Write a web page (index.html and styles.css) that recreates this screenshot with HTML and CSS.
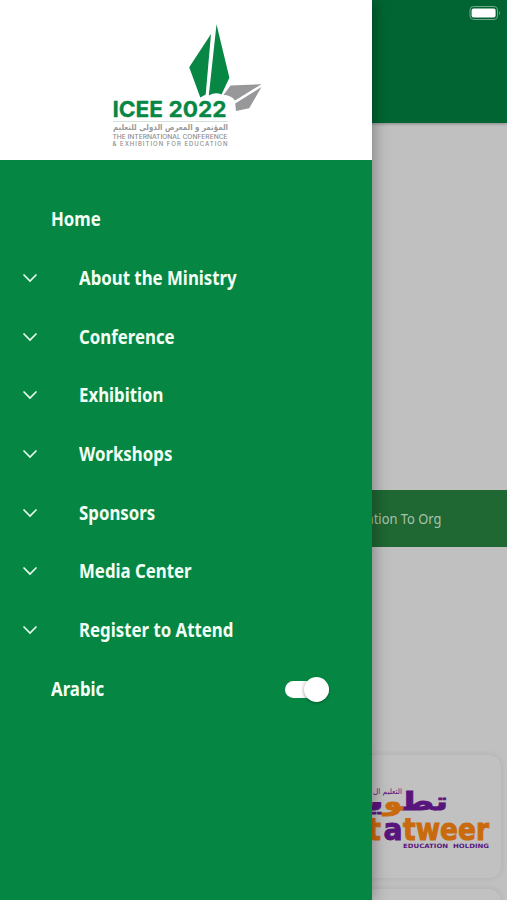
FILE: index.html
```html
<!DOCTYPE html>
<html lang="en">
<head>
<meta charset="utf-8">
<meta name="viewport" content="width=device-width, initial-scale=1">
<title>ICEE 2022</title>
<link rel="stylesheet" href="styles.css">
</head>
<body>
<div class="app">
  <main class="page">
    <header class="topbar">
      <svg class="battery" width="34" height="16" viewBox="0 0 34 16">
        <rect x="1" y="1.500" width="27.5" height="13" rx="3.5" fill="none" stroke="#6fa889"/>
        <rect x="2.600" y="3.400" width="24" height="9.200" rx="2" fill="#fff"/>
        <path d="M30 6q2 2 0 4z" fill="#6fa889"/>
      </svg>
    </header>
    <section class="hero"></section>
    <section class="banner"><span>Invitation To Org</span></section>
    <section class="sponsors">
      <article class="card">
        <svg class="tatweer" width="132" height="70" viewBox="360 783 132 70">
          <text x="402" y="794" direction="rtl" class="ar-small" textLength="29" lengthAdjust="spacingAndGlyphs">التعليم ال</text>
          <g class="ar" direction="rtl">
            <text x="448" y="810" class="purple" textLength="46" lengthAdjust="spacingAndGlyphs">تط&#8205;</text>
            <text x="402.500" y="810" class="orange" textLength="19" lengthAdjust="spacingAndGlyphs">&#8205;و</text>
            <text x="384" y="810" class="purple" textLength="16" lengthAdjust="spacingAndGlyphs">ي&#8205;</text>
          </g>
          <g class="latin">
            <text x="367" y="839.500" class="orange" textLength="14" lengthAdjust="spacingAndGlyphs">t</text>
            <text x="383.500" y="839.500" class="purple" textLength="19" lengthAdjust="spacingAndGlyphs">a</text>
            <text x="403" y="839.500" class="orange" textLength="86" lengthAdjust="spacingAndGlyphs">tweer</text>
          </g>
          <text x="403" y="848.300" class="holding" textLength="86" lengthAdjust="spacingAndGlyphs">EDUCATION &#160;HOLDING</text>
        </svg>
      </article>
      <article class="card"></article>
    </section>
  </main>

  <aside class="drawer">
    <div class="brand">
      <svg width="170" height="150" viewBox="0 0 170 150">
        <path fill="#078743" d="M111 19 105.700 79.500 100.300 82.500 89.200 52.300zM116.500 9.300 129.400 62.700 121.500 79.500q-6-3-12.700 1z"/>
        <path fill="#98989a" d="M130.500 70.500 161.500 69.200 135 85.500q-4-5.500-11.500-5.500zM161.500 72 149.200 93.300 136 96l-.800-7.500z"/>
        <text x="12.500" y="102" class="name" textLength="114" lengthAdjust="spacingAndGlyphs">ICEE 2022</text>
        <path d="M13 106.500h115" stroke="#c8dccf" stroke-width=".8"/>
        <text x="128" y="115" direction="rtl" class="sub-ar" textLength="115" lengthAdjust="spacingAndGlyphs">المؤتمر و المعرض الدولي للتعليم</text>
        <text x="12.500" y="123.700" class="sub" textLength="115" lengthAdjust="spacingAndGlyphs">THE INTERNATIONAL CONFERENCE</text>
        <text x="12.500" y="131.300" class="sub" textLength="115" lengthAdjust="spacing">&amp; EXHIBITION FOR EDUCATION</text>
      </svg>
    </div>
    <nav class="menu">
      <a class="item plain"><span class="label">Home</span></a>
      <a class="item"><svg class="chev" viewBox="0 0 14 8"><path d="M1 1l6 6 6-6"/></svg><span class="label">About the Ministry</span></a>
      <a class="item"><svg class="chev" viewBox="0 0 14 8"><path d="M1 1l6 6 6-6"/></svg><span class="label">Conference</span></a>
      <a class="item"><svg class="chev" viewBox="0 0 14 8"><path d="M1 1l6 6 6-6"/></svg><span class="label">Exhibition</span></a>
      <a class="item"><svg class="chev" viewBox="0 0 14 8"><path d="M1 1l6 6 6-6"/></svg><span class="label">Workshops</span></a>
      <a class="item"><svg class="chev" viewBox="0 0 14 8"><path d="M1 1l6 6 6-6"/></svg><span class="label">Sponsors</span></a>
      <a class="item"><svg class="chev" viewBox="0 0 14 8"><path d="M1 1l6 6 6-6"/></svg><span class="label">Media Center</span></a>
      <a class="item"><svg class="chev" viewBox="0 0 14 8"><path d="M1 1l6 6 6-6"/></svg><span class="label">Register to Attend</span></a>
      <div class="item plain language"><span class="label">Arabic</span><span class="switch"><span class="thumb"></span></span></div>
    </nav>
  </aside>
</div>
</body>
</html>
```
FILE: styles.css
```css
* { box-sizing: border-box; }
body { margin: 0; font-family: "Noto Sans", sans-serif; }
.app { position: relative; width: 507px; height: 900px; overflow: hidden; background: #c0c0c0; }
.page { display: flex; flex-direction: column; height: 900px; }
.topbar { flex: none; height: 123px; padding: 5px 4px 0 0; display: flex; justify-content: flex-end; align-items: flex-start; background: #006532; box-shadow: 0 1px 3px rgba(0,0,0,.3); }
.battery { display: block; }
.hero { flex: none; height: 366.500px; }
.banner { flex: none; height: 57.500px; padding-right: 66px; display: flex; align-items: center; justify-content: flex-end; background: #1f6733; color: #a9c3ae; font-size: 15px; white-space: nowrap; }
.banner span { transform: scaleX(.86); transform-origin: right; }
.sponsors { padding: 208px 6px 0 250px; display: flex; flex-direction: column; gap: 11px; }
.card { flex: none; height: 123px; padding: 28px 9px 0 0; display: flex; justify-content: flex-end; align-items: flex-start; border-radius: 12px; background: #c1c1c1; box-shadow: 0 0 6px rgba(0,0,0,.09); }
.tatweer { display: block; }
.purple { fill: #58157c; stroke: #58157c; }
.orange { fill: #c96a0d; stroke: #c96a0d; }
.ar { font: 700 25px "DejaVu Sans", sans-serif; stroke-width: .8; }
.latin { font: 700 35px "DejaVu Sans", sans-serif; font-size: 31px; stroke-width: 1; }
.ar-small { font: 400 7.500px "DejaVu Sans", sans-serif; fill: #58157c; }
.holding { font: 700 6px "DejaVu Sans", sans-serif; fill: #58157c; }

.drawer { position: absolute; top: 0; left: 0; width: 372px; height: 900px; background: #058743; box-shadow: 0 0 16px rgba(0,0,0,.4); }
.brand { height: 160px; padding: 15px 0 0 100px; background: #fff; overflow: hidden; }
.brand svg { display: block; }
.name { font: 700 22px Inter, sans-serif; fill: #078743; stroke: #078743; stroke-width: .3; }
.sub-ar { font: 700 8px "DejaVu Sans", sans-serif; fill: #9a9a9a; }
.sub { font: 500 6px Inter, sans-serif; fill: #8d8d8d; }
.menu { padding-top: 30px; display: flex; flex-direction: column; }
.item { height: 58.650px; padding-left: 23px; display: flex; align-items: center; color: #f4fff6; }
.plain { padding-left: 51px; }
.chev { width: 14px; height: 8px; margin-right: 42px; overflow: visible; fill: none; stroke: #e9fff0; stroke-width: 1.700; stroke-linecap: round; }
.label { font-size: 19px; font-weight: 700; line-height: 26px; white-space: nowrap; transform: scaleX(.885); transform-origin: left; }
.language { padding-right: 43.500px; padding-top: 2px; justify-content: space-between; }
.switch { display: flex; align-items: center; justify-content: flex-end; width: 44px; height: 17px; border-radius: 9px; background: linear-gradient(to right, #fff 35%, #e3efe8 50%); }
.thumb { width: 25px; height: 25px; border-radius: 50%; background: #fff; box-shadow: 0 1px 3px rgba(0,0,0,.35); flex: none; }
```
